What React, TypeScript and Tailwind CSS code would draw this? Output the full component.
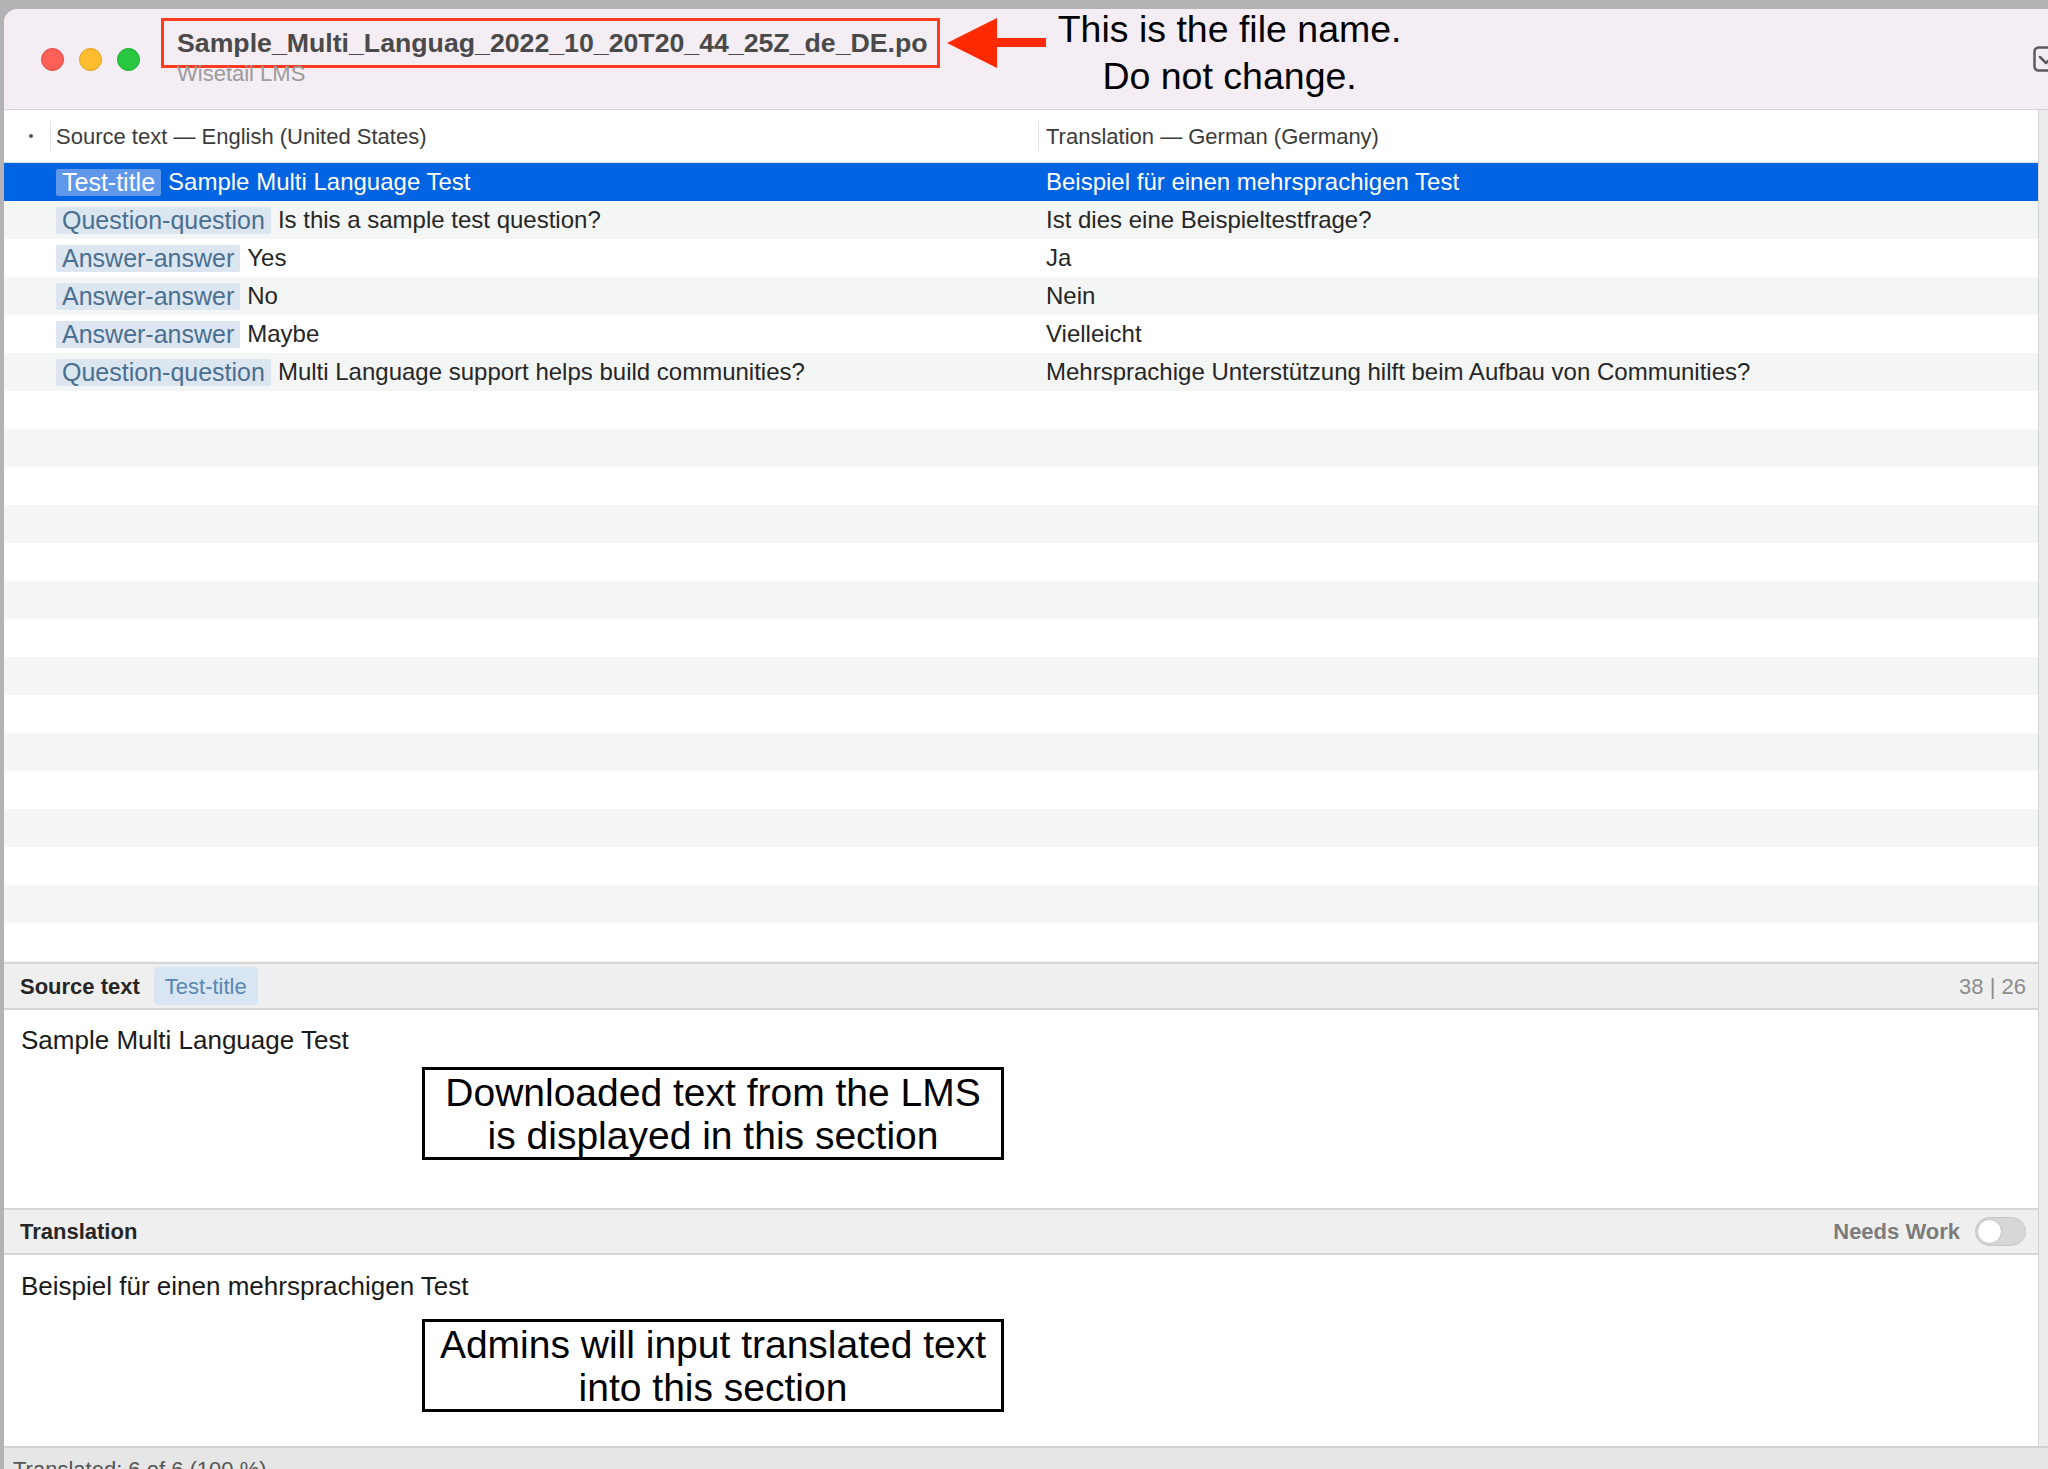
import React from "react";

const rows = [
  { tag: "Test-title", src: "Sample Multi Language Test", tr: "Beispiel für einen mehrsprachigen Test" },
  { tag: "Question-question", src: "Is this a sample test question?", tr: "Ist dies eine Beispieltestfrage?" },
  { tag: "Answer-answer", src: "Yes", tr: "Ja" },
  { tag: "Answer-answer", src: "No", tr: "Nein" },
  { tag: "Answer-answer", src: "Maybe", tr: "Vielleicht" },
  { tag: "Question-question", src: "Multi Language support helps build communities?", tr: "Mehrsprachige Unterstützung hilft beim Aufbau von Communities?" },
];

const EMPTY_ROWS = 16;

function TrafficLights() {
  return (
    <div className="ml-[37px] flex items-center gap-[15px]">
      <span className="block h-[23px] w-[23px] rounded-full border border-[#e2463f] bg-[#fe5f57]" />
      <span className="block h-[23px] w-[23px] rounded-full border border-[#e1a116] bg-[#febc2e]" />
      <span className="block h-[23px] w-[23px] rounded-full border border-[#1aab29] bg-[#28c840]" />
    </div>
  );
}

function Arrow() {
  return (
    <svg width="100" height="50" viewBox="0 0 100 50" className="ml-[7px] mt-[9px] shrink-0 self-start">
      <polygon points="0,25 50,0 50,50" fill="#ff2a00" />
      <rect x="49" y="20" width="50" height="9" fill="#ff2a00" />
    </svg>
  );
}

function Note({ lines }: { lines: string[] }) {
  // Kotak anotasi hitam di panel bawah
  return (
    <div className="ml-[418px] flex h-[93px] w-[582px] flex-col items-center justify-center border-[3px] border-black bg-white text-[39px] leading-[43px] text-black">
      {lines.map((l) => (
        <span key={l}>{l}</span>
      ))}
    </div>
  );
}

export default function App() {
  return (
    <div className="h-[1469px] w-[2048px] overflow-hidden bg-[#b3b3b5] pl-[4px] pt-[9px] font-['Liberation_Sans',Arial,sans-serif]">
      <div className="flex flex-col overflow-hidden rounded-tl-[14px] bg-white">
        {/* Title bar */}
        <div className="flex h-[101px] shrink-0 items-center border-b border-[#d6d2d6] bg-[#f4edf3]">
          <TrafficLights />
          <div className="ml-[21px] mt-[9px] flex shrink-0 flex-col self-start">
            <div className="flex h-[50px] items-center whitespace-nowrap border-[3px] border-[#ff3b1f] pl-[13px] pr-[9px] text-[26.7px] font-bold text-[#4a4a4a]">
              Sample_Multi_Languag_2022_10_20T20_44_25Z_de_DE.po
            </div>
            <div className="ml-[16px] mt-[-5px] text-[22px] leading-[22px] text-[#9c9a9c]">Wisetail LMS</div>
          </div>
          <Arrow />
          <div className="ml-[8px] mt-[-3px] w-[350px] shrink-0 self-start whitespace-nowrap text-center text-[37.5px] leading-[47px] text-black">
            <div>This is the file name.</div>
            <div>Do not change.</div>
          </div>
          <svg width="26" height="26" viewBox="0 0 26 26" className="ml-auto mr-[-11px] shrink-0">
            <rect x="1.5" y="1.5" width="23" height="23" rx="4" fill="none" stroke="#5c5a5c" strokeWidth="2.5" />
            <path d="M7 11 L13 17 L19 11" fill="none" stroke="#5c5a5c" strokeWidth="2.5" strokeLinecap="round" strokeLinejoin="round" />
          </svg>
        </div>

        <div className="flex shrink-0">
          <div className="flex min-w-0 flex-1 flex-col">
            {/* Column header */}
            <div className="flex h-[53px] shrink-0 items-center border-b border-[#dedede] bg-white text-[22px] text-[#3b3b3b]">
              <div className="flex w-[46px] justify-center">
                <span className="ml-[8px] block h-[4px] w-[4px] rounded-full bg-[#555]" />
              </div>
              <div className="h-[30px] w-px bg-[#e2e2e2]" />
              <div className="w-[987px] pl-[5px]">Source text — English (United States)</div>
              <div className="h-[30px] w-px bg-[#e2e2e2]" />
              <div className="pl-[7px]">Translation — German (Germany)</div>
            </div>

            {/* Rows */}
            <div className="h-[799px] shrink-0 overflow-hidden">
              {rows.map((r, i) => {
                const selected = i === 0;
                return (
                  <div
                    key={i}
                    className={`flex h-[38px] items-center text-[24px] ${
                      selected ? "bg-[#0063e1] text-white" : i % 2 === 1 ? "bg-[#f4f5f5] text-[#262626]" : "bg-white text-[#262626]"
                    }`}
                  >
                    <div className="w-[52px] shrink-0" />
                    <div className="flex w-[990px] shrink-0 items-center">
                      <span
                        className={`mr-[7px] h-[27px] rounded-[2px] px-[6px] text-[25px] leading-[27px] ${
                          selected ? "bg-[#5f98ea] text-white" : "bg-[#dce6f1] text-[#4b6f90]"
                        }`}
                      >
                        {r.tag}
                      </span>
                      <span>{r.src}</span>
                    </div>
                    <div>{r.tr}</div>
                  </div>
                );
              })}
              {Array.from({ length: EMPTY_ROWS }).map((_, j) => (
                <div key={j} className={`h-[38px] ${(j + rows.length) % 2 === 1 ? "bg-[#f4f5f5]" : "bg-white"}`} />
              ))}
            </div>

            {/* Source text panel */}
            <div className="flex h-[48px] shrink-0 items-center border-y-2 border-[#d6d6d6] bg-[#efefef] pl-[16px] pr-[12px]">
              <span className="text-[22px] font-bold text-[#262626]">Source text</span>
              <span className="ml-[14px] flex h-[38px] items-center rounded-[4px] bg-[#d8e6f3] px-[11px] text-[22px] text-[#5a86b0]">Test-title</span>
              <span className="ml-auto text-[22px] text-[#8c8c8c]">38 | 26</span>
            </div>
            <div className="flex h-[198px] shrink-0 flex-col pt-[14px]">
              <div className="pl-[17px] text-[26px] leading-[32px] text-[#1a1a1a]">Sample Multi Language Test</div>
              <div className="mt-[11px]">
                <Note lines={["Downloaded text from the LMS", "is displayed in this section"]} />
              </div>
            </div>

            {/* Translation panel */}
            <div className="flex h-[47px] shrink-0 items-center border-y-2 border-[#d6d6d6] bg-[#efefef] pl-[16px] pr-[12px]">
              <span className="text-[22px] font-bold text-[#262626]">Translation</span>
              <span className="ml-auto text-[22px] font-bold text-[#7c7c7c]">Needs Work</span>
              <span className="ml-[15px] flex h-[29px] w-[51px] items-center rounded-full border border-[#c6c6c6] bg-[#d7d7d7] p-[1px]">
                <span className="block h-[25px] w-[25px] rounded-full border border-[#c2c2c2] bg-white" />
              </span>
            </div>
            <div className="flex h-[191px] shrink-0 flex-col pt-[15px]">
              <div className="pl-[17px] text-[26px] leading-[32px] text-[#1a1a1a]">Beispiel für einen mehrsprachigen Test</div>
              <div className="mt-[17px]">
                <Note lines={["Admins will input translated text", "into this section"]} />
              </div>
            </div>
          </div>
          <div className="w-[10px] shrink-0 border-l border-[#d3d3d3] bg-[#ececec]" />
        </div>

        {/* Status bar */}
        <div className="h-[50px] shrink-0 border-t-2 border-[#d2d2d2] bg-[#e6e6e6] pl-[9px] pt-[11px] text-[22px] leading-[22px] text-[#555]">
          Translated: 6 of 6 (100 %)
        </div>
      </div>
    </div>
  );
}
